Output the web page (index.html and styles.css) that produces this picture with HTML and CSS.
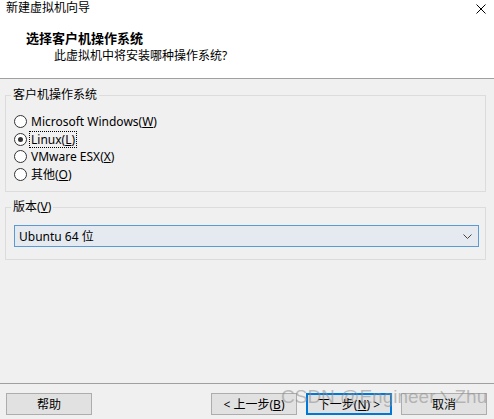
FILE: index.html
```
<!DOCTYPE html>
<html>
<head>
   <meta charset="utf-8">
   <link rel="stylesheet" href="styles.css">
</head>
<body>
   <div class="wizard">
      <div class="header">
         <div class="title-row">
            <span class="title">新建虚拟机向导</span>
            <svg class="close" width="10" height="10" viewBox="0 0 10 10">
               <path d="M0.5 0.5 L9.5 9.5 M9.5 0.5 L0.5 9.5" stroke="#000" stroke-width="1" fill="none"/>
            </svg>
         </div>
         <div class="heading">选择客户机操作系统</div>
         <div class="subtitle">此虚拟机中将安装哪种操作系统?</div>
      </div>

      <div class="content">
         <fieldset class="group group-os">
            <legend>客户机操作系统</legend>
            <div class="radio-list">
               <div class="radio-row"><span class="radio"></span><span class="radio-label">Microsoft Windows(<u>W</u>)</span></div>
               <div class="radio-row"><span class="radio checked"></span><span class="radio-label focused">Linux(<u>L</u>)</span></div>
               <div class="radio-row"><span class="radio"></span><span class="radio-label">VMware ESX(<u>X</u>)</span></div>
               <div class="radio-row"><span class="radio"></span><span class="radio-label">其他(<u>O</u>)</span></div>
            </div>
         </fieldset>

         <fieldset class="group group-version">
            <legend>版本(<u>V</u>)</legend>
            <div class="combo">
               <span>Ubuntu 64 位</span>
               <svg width="9" height="5" viewBox="0 0 9 5">
                  <path d="M0.5 0.5 L4.5 4.5 L8.5 0.5" stroke="#444" stroke-width="1" fill="none"/>
               </svg>
            </div>
         </fieldset>
      </div>

      <div class="footer">
         <button class="btn">帮助</button>
         <div class="spacer"></div>
         <button class="btn">&lt; 上一步(<u>B</u>)</button>
         <button class="btn btn-default">下一步(<u>N</u>) &gt;</button>
         <button class="btn">取消</button>
         <span class="watermark">CSDN @Engineer丶Zhu</span>
      </div>
   </div>
</body>
</html>
```

FILE: styles.css
```
body {
   margin: 0;
   background-color: #f0f0f0;
   font-family: "Noto Sans", "Noto Sans CJK SC", sans-serif;
   font-size: 12px;
   color: #000;
}
u {
   text-decoration: underline;
   text-underline-offset: 1px;
}
.wizard {
   width: 494px;
   height: 419px;
   display: flex;
   flex-direction: column;
   overflow: hidden;
}
.header {
   background-color: #fff;
   border-bottom: 1px solid #a0a0a0;
   box-sizing: border-box;
   height: 79px;
}
.title-row {
   display: flex;
   justify-content: space-between;
   align-items: center;
   height: 16px;
   padding: 0 8px 0 6px;
}
.title {
   line-height: 16px;
}
.close {
   margin-top: 1px;
}
.heading {
   font-size: 13px;
   font-weight: bold;
   line-height: 17px;
   margin: 14px 0 0 26px;
}
.subtitle {
   line-height: 16px;
   margin: 1px 0 0 54px;
}
.content {
   flex: 1;
   padding-top: 8px;
}
.group {
   margin: 0 0 0 5px;
   width: 481px;
   box-sizing: border-box;
   border: 1px solid #dcdcdc;
   padding: 0 5px;
}
.group legend {
   padding: 0 2px;
   line-height: 16px;
}
.group-os {
   height: 105px;
   padding-top: 10px;
}
.group-version {
   height: 61px;
   margin-top: 7px;
   padding-top: 0;
}
.radio-list {
   display: flex;
   flex-direction: column;
   margin-left: 3px;
}
.radio-row {
   display: flex;
   align-items: center;
   height: 17.5px;
}
.radio {
   width: 11px;
   height: 11px;
   border: 1px solid #333;
   border-radius: 50%;
   background-color: #fff;
   position: relative;
   margin-right: 2px;
}
.radio.checked::after {
   content: "";
   position: absolute;
   left: 3px;
   top: 3px;
   width: 5px;
   height: 5px;
   border-radius: 50%;
   background-color: #333;
}
.radio-label {
   line-height: 15px;
   padding: 0 1px;
   border: 1px solid transparent;
}
.radio-label.focused {
   border: 1px dotted #000;
}
.combo {
   display: flex;
   justify-content: space-between;
   align-items: center;
   width: 465px;
   height: 22px;
   box-sizing: border-box;
   margin: 10px 0 0 3px;
   padding: 0 6px 0 4px;
   background-color: #e5eaf1;
   border: 1px solid #5b9bd5;
}
.footer {
   position: relative;
   display: flex;
   align-items: flex-start;
   gap: 9px;
   height: 36px;
   box-sizing: border-box;
   border-top: 1px solid #a0a0a0;
   padding: 9px 7px 0 6px;
}
.spacer {
   flex: 1;
}
.btn {
   width: 86px;
   height: 22px;
   margin: 0;
   padding: 0;
   font-family: "Noto Sans", "Noto Sans CJK SC", sans-serif;
   font-size: 12px;
   color: #000;
   background-color: #e1e1e1;
   border: 1px solid #adadad;
}
.btn-default {
   border: 2px solid #0078d7;
}
.watermark {
   position: absolute;
   left: 281px;
   top: 0;
   font-family: "Liberation Sans", sans-serif;
   font-size: 19px;
   color: rgba(140, 140, 140, 0.55);
   white-space: nowrap;
}
```
